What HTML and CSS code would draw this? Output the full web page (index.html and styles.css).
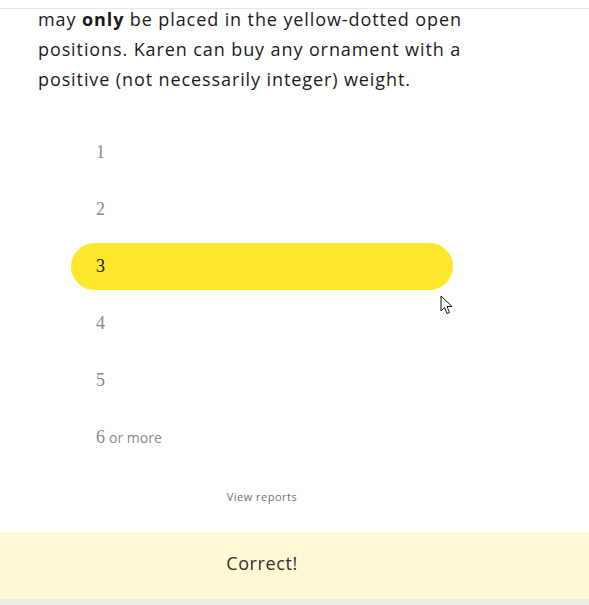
FILE: index.html
```html
<!DOCTYPE html>
<html>
<head>
<meta charset="utf-8">
<link rel="stylesheet" href="styles.css">
</head>
<body>
<div class="topbar"></div>
<main class="page">
  <p class="prompt">may <b>only</b> be placed in the yellow-dotted open positions. Karen can buy any ornament with a positive (not necessarily integer) weight.</p>
  <ul class="choices">
    <li class="choice"><span class="num">1</span></li>
    <li class="choice"><span class="num">2</span></li>
    <li class="choice selected"><span class="num">3</span></li>
    <li class="choice"><span class="num">4</span></li>
    <li class="choice"><span class="num">5</span></li>
    <li class="choice"><span class="num">6</span> <span class="word">or more</span></li>
  </ul>
  <div class="reports">View reports</div>
</main>
<div class="feedback">Correct!</div>
<div class="bottom"></div>
<svg class="cursor" width="14" height="21" viewBox="0 0 14 21"><path d="M1 1 L1 16 L4.5 12.5 L7 18.5 L9.5 17.5 L7 11.5 L12 11.5 Z" fill="#fff" stroke="#111" stroke-width="1" stroke-linejoin="miter"/></svg>
</body>
</html>
```
FILE: styles.css
```css
html, body {
  margin: 0;
  padding: 0;
  background: #fff;
}
body {
  width: 589px;
  height: 605px;
  overflow: hidden;
  position: relative;
  font-family: "Open Sans", sans-serif;
}
.topbar {
  position: absolute;
  top: 0;
  left: 0;
  right: 0;
  height: 8px;
  border-bottom: 1px solid #e6e6e6;
  background: #fff;
  z-index: 2;
}
.page {
  width: 448px;
  margin-left: 38px;
  padding-top: 4px;
  height: 528px;
  display: flex;
  flex-direction: column;
}
.prompt {
  margin: 0;
  width: 448px;
  font-size: 18px;
  line-height: 30px;
  letter-spacing: 0.9px;
  color: #1a1a1a;
}
.prompt b {
  font-weight: 700;
}
.choices {
  list-style: none;
  margin: 35px 0 0 0;
  padding: 0;
  display: flex;
  flex-direction: column;
  gap: 10px;
  align-items: center;
}
.choice {
  width: 382px;
  height: 47px;
  border-radius: 24px;
  box-sizing: border-box;
  padding-left: 25px;
  display: flex;
  align-items: center;
  color: #8a8a8a;
}
.num {
  font-family: "Liberation Serif", serif;
  font-size: 18px;
}
.word {
  font-family: "Open Sans", sans-serif;
  font-size: 14px;
  margin-left: 4px;
}
.choice.selected {
  background: #ffe82b;
  color: #111;
}
.reports {
  margin-top: 28px;
  text-align: center;
  font-size: 11px;
  letter-spacing: 0.5px;
  color: #6b6f76;
  font-family: "Open Sans", sans-serif;
}
.feedback {
  height: 67px;
  box-sizing: border-box;
  padding-bottom: 5px;
  background: #fff8d5;
  display: flex;
  align-items: center;
  justify-content: center;
  padding-right: 65px;
  font-size: 18px;
  letter-spacing: 0.6px;
  color: #33302a;
  font-family: "Open Sans", sans-serif;
}
.bottom {
  height: 10px;
  background: #ebebeb;
}
.cursor {
  position: absolute;
  left: 440px;
  top: 295px;
}
```
